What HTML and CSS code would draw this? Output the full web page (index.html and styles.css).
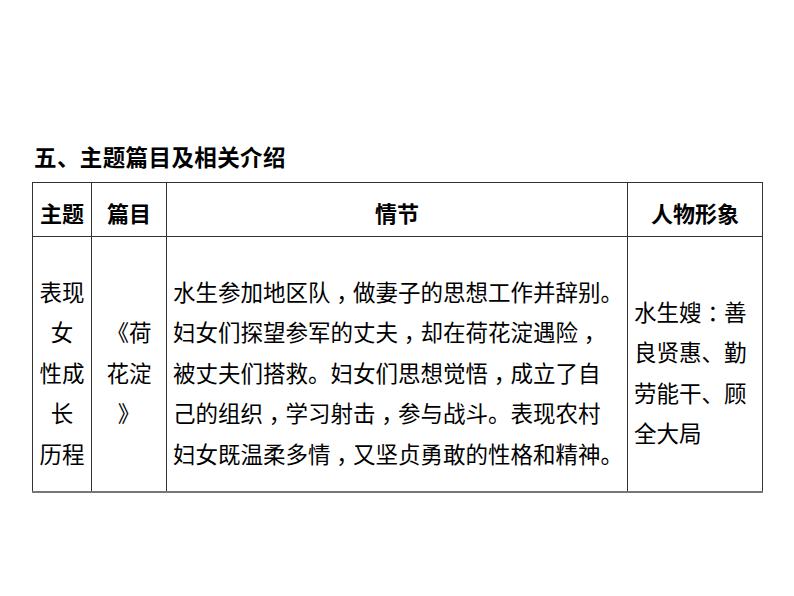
FILE: index.html
```html
<!DOCTYPE html>
<html lang="zh">
<head>
<meta charset="utf-8">
<link rel="stylesheet" href="styles.css">
</head>
<body>
<div class="page">
  <h1 class="title">五、主题篇目及相关介绍</h1>
  <table class="grid">
    <colgroup>
      <col class="c1"><col class="c2"><col class="c3"><col class="c4">
    </colgroup>
    <thead>
      <tr class="head">
        <th>主题</th><th>篇目</th><th>情节</th><th>人物形象</th>
      </tr>
    </thead>
    <tbody>
      <tr class="body">
        <td class="center">表现<br>女<br>性成<br>长<br>历程</td>
        <td class="center">《荷<br>花淀<br>》</td>
        <td class="left">水生参加地区队<span class="p">，</span>做妻子的思想工作并辞别。<br>妇女们探望参军的丈夫<span class="p">，</span>却在荷花淀遇险<span class="p">，</span><br>被丈夫们搭救。妇女们思想觉悟<span class="p">，</span>成立了自<br>己的组织<span class="p">，</span>学习射击<span class="p">，</span>参与战斗。表现农村<br>妇女既温柔多情<span class="p">，</span>又坚贞勇敢的性格和精神。</td>
        <td class="left">水生嫂<span class="p">：</span>善<br>良贤惠、勤<br>劳能干、顾<br>全大局</td>
      </tr>
    </tbody>
  </table>
</div>
</body>
</html>
```
FILE: styles.css
```css
html, body {
  margin: 0;
  padding: 0;
  background: #fff;
}
body {
  width: 794px;
  height: 596px;
  overflow: hidden;
  font-family: "Noto Sans CJK SC", "Noto Sans", sans-serif;
  color: #000;
}
.page {
  padding: 141px 0 0 32px;
}
.title {
  margin: 0 0 11px 2px;
  font-size: 22.5px;
  line-height: 30px;
  font-weight: 700;
  letter-spacing: 0.4px;
}
.grid {
  border-collapse: collapse;
  table-layout: fixed;
  width: 730px;
  border-top: 1px solid #111;
  border-right: 1px solid #111;
  border-left: 1px solid #777;
  border-bottom: 2px solid #777;
}
.c1 { width: 59px; }
.c2 { width: 75px; }
.c3 { width: 461px; }
.c4 { width: 135px; }
.grid th, .grid td {
  border: 1px solid #333;
  padding: 0;
}
.head th {
  height: 54px;
  font-size: 22px;
  font-weight: 700;
  text-align: center;
  vertical-align: middle;
  padding-top: 4px;
  box-sizing: border-box;
  white-space: nowrap;
}
.body td {
  height: 255px;
  font-size: 22.5px;
  line-height: 40.5px;
  vertical-align: middle;
  padding-top: 16px;
  box-sizing: border-box;
  white-space: nowrap;
}
.body td.center {
  text-align: center;
}
.body td.left {
  text-align: left;
  padding-left: 6px;
}
.p {
  display: inline-block;
  width: 1em;
  text-align: center;
  font-feature-settings: "halt" 1;
}
```
